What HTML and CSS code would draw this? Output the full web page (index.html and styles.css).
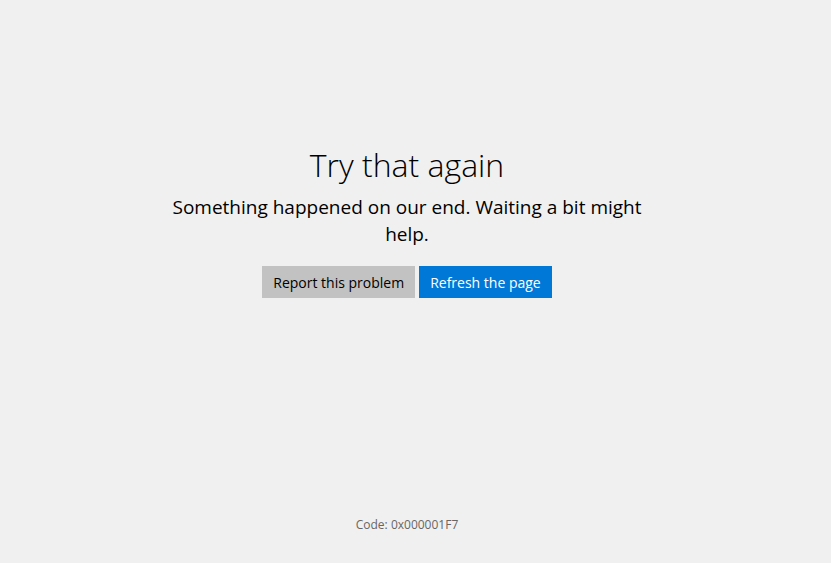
FILE: index.html
```html
<!DOCTYPE html>
<html lang="en">
<head>
<meta charset="UTF-8">
<title>Try that again</title>
<link rel="stylesheet" href="styles.css">
</head>
<body>
<div class="page">
  <div class="message">
    <h1 class="title">Try that again</h1>
    <p class="detail">Something happened on our end. Waiting a bit might help.</p>
    <div class="actions">
      <button class="btn btn-secondary">Report this problem</button>
      <button class="btn btn-primary">Refresh the page</button>
    </div>
  </div>
  <div class="code">Code: 0x000001F7</div>
</div>
</body>
</html>
```

FILE: styles.css
```css
html, body {
  margin: 0;
  padding: 0;
  height: 100%;
}
body {
  background: #f0f0f0;
  font-family: "Open Sans", "Noto Sans", sans-serif;
  color: #000;
}
.page {
  box-sizing: border-box;
  height: 100%;
  padding-right: 17px;
  display: flex;
  flex-direction: column;
  align-items: center;
}
.message {
  flex: 1;
  display: flex;
  flex-direction: column;
  align-items: center;
  padding-top: 143px;
  width: 490px;
  text-align: center;
}
.title {
  margin: 0;
  font-size: 32px;
  font-weight: 300;
  line-height: 44px;
}
.detail {
  margin: 7px 0 0;
  font-size: 19px;
  line-height: 27px;
}
.actions {
  display: flex;
  gap: 4px;
  margin-top: 18px;
}
.btn {
  border: 0;
  height: 32px;
  padding: 0 11px;
  font-family: inherit;
  font-size: 14px;
  cursor: pointer;
}
.btn-secondary {
  background: #c2c2c2;
  color: #000;
}
.btn-primary {
  background: #0078d7;
  color: #fff;
}
.code {
  margin-bottom: 30px;
  font-size: 12px;
  color: #666;
}
```
